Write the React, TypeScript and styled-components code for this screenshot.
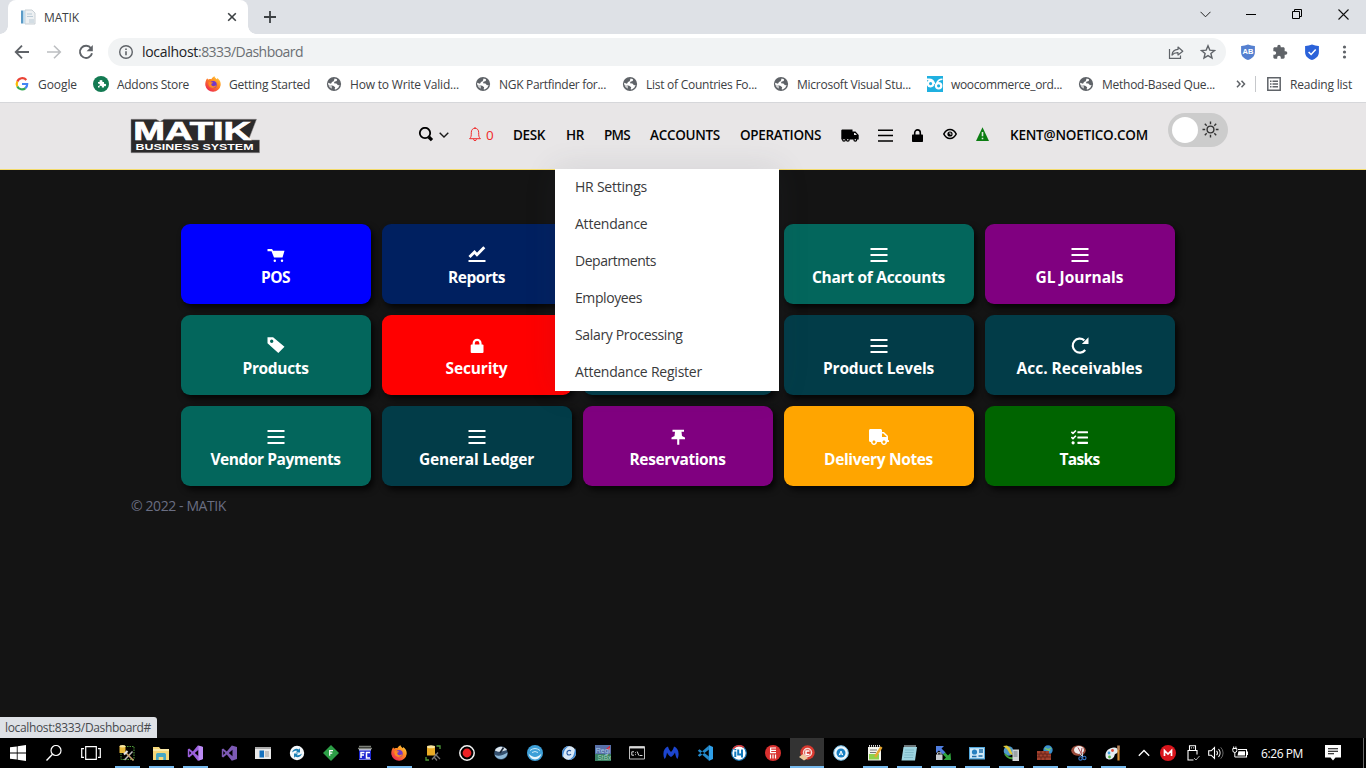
import React, { useLayoutEffect, useRef, useState } from 'react';
import styled, { createGlobalStyle, css } from 'styled-components';
import { FaTruck, FaTasks } from 'react-icons/fa';
import { MdExtension } from 'react-icons/md';

const GlobalStyle = createGlobalStyle`
  * { box-sizing: border-box; }
  html, body { margin: 0; padding: 0; overflow: hidden; }
  body { font-family: "Open Sans", "Noto Sans", sans-serif; }
  svg { display: block; flex: none; }
`;

/* ---------- text whose tracking adapts to a set width ---------- */

const FitSpan = styled.span<{ $w: number }>`
  display: block;
  flex: none;
  width: ${p => p.$w}px;
  white-space: nowrap;
`;

function Fit({ w, children }: { w: number; children: string }) {
  const ref = useRef<HTMLSpanElement>(null);
  const [spacing, setSpacing] = useState(0);
  useLayoutEffect(() => {
    if (!ref.current) return;
    const natural = ref.current.getBoundingClientRect().width;
    setSpacing((w - natural) / children.length);
  }, [w, children]);
  return (
    <FitSpan $w={w}>
      <span ref={ref} style={{ letterSpacing: spacing }}>{children}</span>
    </FitSpan>
  );
}

/* ---------- layout ---------- */

const Screen = styled.div`
  width: 1366px;
  height: 768px;
  display: flex;
  flex-direction: column;
  background: #141414;
`;

const TabStrip = styled.div`
  height: 34px;
  flex: none;
  display: flex;
  align-items: stretch;
  padding-left: 8px;
  background: #dee1e6;
  color: #3c4043;
`;

const Tab = styled.div`
  position: relative;
  width: 240px;
  display: flex;
  align-items: center;
  padding: 0 11px 0 12px;
  background: #fff;
  border-radius: 8px 8px 0 0;
  font-size: 12px;
  &::before, &::after {
    content: "";
    position: absolute;
    bottom: 0;
    width: 8px;
    height: 8px;
  }
  &::before { left: -8px; background: radial-gradient(circle at 0 0, transparent 7.5px, #fff 8px); }
  &::after { right: -8px; background: radial-gradient(circle at 100% 0, transparent 7.5px, #fff 8px); }
`;

const TabTitle = styled.div`
  margin-left: 8px;
  flex: 1;
`;

const NewTab = styled.div`
  display: flex;
  align-items: center;
  margin-left: 16px;
  flex: 1;
`;

const WindowButtons = styled.div`
  display: flex;
  padding-bottom: 6px;
`;

const WindowButton = styled.div`
  width: 46px;
  display: flex;
  align-items: center;
  justify-content: center;
`;

const Toolbar = styled.div`
  height: 36px;
  flex: none;
  display: flex;
  align-items: center;
  padding: 0 13px 0 14px;
  background: #fff;
`;

const NavButtons = styled.div`
  display: flex;
  gap: 16px;
  width: 94px;
`;

const Omnibox = styled.div`
  width: 1118px;
  height: 28px;
  display: flex;
  align-items: center;
  padding: 0 10px;
  border-radius: 14px;
  background: #f1f3f4;
  font-size: 14px;
  color: #6b6f73;
`;

const Url = styled.div`
  display: flex;
  flex: 1;
  margin: -1px 0 0 8px;
`;

const UrlHost = styled.div`
  color: #202124;
`;

const OmniActions = styled.div`
  display: flex;
  gap: 16px;
`;

const Extensions = styled.div`
  display: flex;
  align-items: center;
  gap: 16px;
  margin-left: 14px;
`;

const Bookmarks = styled.div`
  height: 33px;
  flex: none;
  display: flex;
  align-items: center;
  padding: 0 14px 4px;
  background: #fff;
  border-bottom: 1px solid #d6d7da;
  font-size: 12px;
  color: #3c4043;
`;

const BookmarkList = styled.div`
  display: flex;
  gap: 16px;
  width: 1222px;
`;

const Bookmark = styled.div`
  display: flex;
  align-items: center;
  gap: 8px;
`;

const ReadingList = styled.div`
  display: flex;
  align-items: center;
  gap: 9px;
  height: 16px;
  margin-left: 9px;
  padding-left: 11px;
  border-left: 1px solid #c6c8cb;
`;

const AppHeader = styled.header`
  height: 67px;
  flex: none;
  display: flex;
  padding-left: 130px;
  background: #e8e6e7;
  border-bottom: 1px solid #f3da6b;
`;

const LogoBox = styled.div`
  padding-top: 10px;
  width: 288px;
`;

const Menu = styled.nav`
  display: flex;
  align-items: center;
  height: 64px;
  color: #050505;
  font-size: 13.5px;
  font-weight: 600;
`;

const MenuItem = styled.div<{ $gap?: number }>`
  position: relative;
  display: flex;
  align-items: center;
  height: 100%;
  margin-right: ${p => p.$gap ?? 20}px;
`;

const BellItem = styled(MenuItem)`
  gap: 5px;
  color: #f02a2a;
  font-weight: 400;
`;

const Dropdown = styled.div`
  position: absolute;
  z-index: 5;
  left: -11px;
  top: 66px;
  width: 224px;
  background: #fff;
  box-shadow: 0 0 30px rgba(60, 66, 80, 0.12);
`;

const DropdownItem = styled.div`
  height: 37px;
  padding-left: 20px;
  font-size: 14px;
  font-weight: 400;
  line-height: 36px;
  color: #3a3a3c;
`;

const Toggle = styled.div`
  width: 60px;
  height: 34px;
  display: flex;
  align-items: center;
  justify-content: space-between;
  padding: 0 9px 0 4px;
  margin-bottom: 11px;
  border-radius: 17px;
  background: #ccc;
`;

const Knob = styled.div`
  width: 26px;
  height: 26px;
  border-radius: 50%;
  background: #fff;
`;

const Main = styled.main`
  flex: 1;
  display: flex;
  flex-direction: column;
  padding: 54px 0 0 131px;
`;

const CardGrid = styled.div`
  display: grid;
  grid-template-columns: repeat(5, 190px);
  gap: 11px;
  margin-left: 50px;
`;

const Card = styled.div<{ $bg: string }>`
  height: 80px;
  display: flex;
  flex-direction: column;
  align-items: center;
  padding: 22px 1px 0 0;
  border-radius: 9px;
  background: ${p => p.$bg};
  box-shadow: 3px 4px 6px rgba(0, 0, 0, 0.75);
  color: #fff;
`;

const CardIcon = styled.div`
  height: 18px;
  display: flex;
  align-items: center;
  justify-content: center;
`;

const CardLabel = styled.div`
  margin-top: 3px;
  font-size: 15.5px;
  font-weight: 700;
  line-height: 21px;
`;

const Copyright = styled.footer`
  margin-top: 10px;
  font-size: 14px;
  line-height: 20px;
  color: #6a6e82;
`;

const StatusBubble = styled.div`
  align-self: flex-start;
  width: 157px;
  height: 21px;
  padding-left: 5px;
  border-radius: 0 3px 0 0;
  background: #dee1e6;
  font-size: 12px;
  line-height: 21px;
  color: #46494d;
`;

const Taskbar = styled.div`
  height: 30px;
  flex: none;
  display: flex;
  background: #000;
  color: #fff;
`;

const TaskButton = styled.div<{ $w?: number; $open?: boolean; $active?: boolean }>`
  width: ${p => p.$w ?? 34}px;
  height: 30px;
  flex: none;
  display: flex;
  align-items: center;
  justify-content: center;
  ${p => p.$open && css`
    background: linear-gradient(#76b9ed, #76b9ed) center bottom / 25px 2px no-repeat;
  `}
  ${p => p.$active && css`
    background: linear-gradient(#76b9ed, #76b9ed) center bottom / 34px 2px no-repeat, #333;
  `}
`;

const Tray = styled.div`
  display: flex;
  align-items: center;
  flex: 1;
  margin-left: 2px;
`;

const Clock = styled.div`
  margin-left: 9px;
  font-size: 12px;
`;

const ShowDesktop = styled.div`
  width: 5px;
  height: 30px;
  margin-left: auto;
  border-left: 1px solid #6a6a6a;
`;

/* ---------- browser icons ---------- */

const PageIcon = () => (
  <svg width="16" height="16" viewBox="0 0 16 16">
    <path d="M5 1h7l3 3v11H5z" fill="#edf0f2" stroke="#c9d0d5" />
    <path d="M1 1.500h2.500v13H1z" fill="#5b9bc7" />
    <path d="M3.500 1.500H5v13H3.500z" fill="#c5dff0" />
    <path d="M7 5h5M7 7.500h6M9 11h5M9 13h5" stroke="#b9cad6" />
  </svg>
);

const Globe = () => (
  <svg width="16" height="16" viewBox="0 0 16 16">
    <circle cx="8" cy="8" r="7.1" fill="#5f6368" />
    <path d="M8.6 2.4 11 3.2 10.8 5 8.4 5.8 8 7.2 10.4 7.4 12 9.300 13.600 9 12.300 11.800 9.800 13.500 8.600 13.300 9.200 11.200 7.200 9.800 2.300 8.800 2.100 6.800 5 7.800 6 6 7.600 5.200z" fill="#fff" />
    <path d="M2.300 8.400 5.400 9.200 6 11 5.600 12.800A6 6 0 0 1 2.300 8.400z" fill="#fff" opacity=".7" />
  </svg>
);

const GoogleIcon = () => (
  <svg width="16" height="16" viewBox="0 0 16 16" fill="none" strokeWidth="2.2">
    <path d="M12.3 4A5.3 5.3 0 0 0 3.3 5.6" stroke="#ea4335" />
    <path d="M3.3 5.6a5.3 5.3 0 0 0 0 4.8" stroke="#fbbc05" />
    <path d="M3.3 10.4a5.3 5.3 0 0 0 8.2 1.7" stroke="#34a853" />
    <path d="M8 8h5.2a5.2 5.2 0 0 1-1.8 4.1" stroke="#4285f4" />
  </svg>
);

const AddonIcon = () => (
  <svg width="16" height="16" viewBox="0 0 16 16">
    <circle cx="8" cy="8" r="8" fill="#137a52" />
    <path d="M5 6h1.700a1.400 1.400 0 1 1 2.600 0H11v2a1.300 1.300 0 1 1 0 2v1.500H8.800a1.200 1.200 0 1 0-2.200 0H5V9.700a1.200 1.200 0 1 0 0-2z" fill="#fff" />
  </svg>
);

const Firefox = () => (
  <svg width="16" height="16" viewBox="0 0 16 16">
    <defs>
      <linearGradient id="fox" x1="1" y1="0" x2=".2" y2="1">
        <stop offset="0" stopColor="#ffe04b" />
        <stop offset=".45" stopColor="#ff8a1e" />
        <stop offset="1" stopColor="#ec2154" />
      </linearGradient>
    </defs>
    <path d="M2.2 2.2C2.5 3 3 3.4 3.6 3.6 4.5 3 5.5 3 6.4 3.2 7 1.8 8 .8 9.6.2c0 1.3 1.1 2 2.2 3 .4-.3.5-.7.5-1.1C14.7 3.9 16 6.2 15.7 9A7.8 7.8 0 0 1 .3 9.3C.1 6.5.8 4.2 2.2 2.2z" fill="url(#fox)" />
    <circle cx="8.2" cy="8.6" r="3.5" fill="#7138c9" />
    <path d="M3.5 6.2c1.4-.6 2.400 0 3.800 0 .8 0 .8.7-.6 1.400-.8.5-.5 2.500 1.600 2.700 1.400.1 2-.7 2.800-.7-.3 2-3.800 3.400-6.200 1.300-1.400-1.300-1.700-3-1.400-4.700z" fill="#ff8a20" />
  </svg>
);

const WooIcon = () => (
  <svg width="16" height="16" viewBox="0 0 16 16">
    <rect width="16" height="16" fill="#1fb0e0" />
    <g fill="none" stroke="#fff" strokeWidth="2.2">
      <circle cx="3.6" cy="7.6" r="2.700" />
      <circle cx="11.600" cy="9.800" r="2.700" />
      <path d="M0 3.400C4 2.600 6.500 4 7.500 8M15.500 3.200c-3.500 0-5 1.500-5.800 4.500" strokeWidth="1.600" />
    </g>
  </svg>
);

const StarIcon = () => (
  <svg width="16" height="16" viewBox="0 0 16 16" fill="none" stroke="#5f6368" strokeWidth="1.4">
    <path d="m8 1.800 1.800 4.300 4.700.4-3.600 3 1.100 4.600L8 11.600l-4 2.500 1.100-4.600-3.600-3 4.700-.4z" />
  </svg>
);

const ShareIcon = () => (
  <svg width="16" height="16" viewBox="0 0 16 16" fill="none" stroke="#5f6368" strokeWidth="1.2">
    <path d="M1.500 5v9.400h11V11.500" />
    <path d="M4 11c.3-3.500 2.400-5.400 6-5.600V3l4.800 4.200L10 11V8.700C7.500 8.600 5.500 9.300 4 11z" strokeLinejoin="round" />
  </svg>
);

const shieldShape = 'M8 .5Q11.500 2 14.900 1.900V8c0 4-2.600 6.500-6.900 8C3.700 14.500 1.100 12 1.100 8V1.900Q4.500 2 8 .5z';

const AbShield = () => (
  <svg width="16" height="16" viewBox="0 0 16 16">
    <path d={shieldShape} fill="#5580d0" />
    <text x="8" y="10.400" textAnchor="middle" fontSize="7.500" fontWeight="700" fontFamily="Liberation Sans, sans-serif" fill="#fff">AB</text>
  </svg>
);

const CheckShield = () => (
  <svg width="16" height="16" viewBox="0 0 16 16">
    <path d={shieldShape} fill="#2b62d9" />
    <path d="m4.600 8 2.500 2.500L11.700 5.500" fill="none" stroke="#fff" strokeWidth="1.500" />
  </svg>
);

/* ---------- app icons ---------- */

const Logo = () => (
  <svg width="130" height="41" viewBox="0 -5 130 41">
    <path d="M1 1.300H26L30 3.600 34 1.300H126.500L118.500 22H129.500V34.700H1z" fill="#2b2a2b" stroke="#8b898a" strokeWidth=".5" />
    <text x="3.200" y="22" textLength="118" lengthAdjust="spacingAndGlyphs" fontFamily="Liberation Sans, sans-serif" fontSize="25.500" fontWeight="700" fill="#fff" stroke="#fff" strokeWidth=".7">MATIK</text>
    <text x="5.500" y="32.300" textLength="118" lengthAdjust="spacingAndGlyphs" fontFamily="Liberation Sans, sans-serif" fontSize="9" fontWeight="700" fill="#fff">BUSINESS SYSTEM</text>
  </svg>
);

const SearchGlyph = () => (
  <svg width="16" height="16" viewBox="0 0 16 16" fill="none" stroke="#000">
    <circle cx="7" cy="6" r="5.200" strokeWidth="1.800" />
    <path d="m10.800 10 3.200 3.200" strokeWidth="3.200" />
  </svg>
);

const ChevronDown = () => (
  <svg width="10" height="6" viewBox="0 0 10 6" fill="none" stroke="#1a1a1a" strokeWidth="1.400">
    <path d="m.7.700 4.300 4.200L9.300.700" />
  </svg>
);

const Bell = () => (
  <svg width="12" height="16" viewBox="0 0 12 16" fill="none" stroke="#f02a2a" strokeWidth="1">
    <path d="M.6 11.700C2.300 10 2.300 9 2.300 5.500 2.300 3 3.700 1.300 6 1.300S9.700 3 9.700 5.500c0 3.500 0 4.500 1.700 6.200zM4.600 12.200a1.400 1.400 0 0 0 2.800 0M6 0v1.300" />
  </svg>
);

const NavTruck = () => (
  <svg width="18" height="13" viewBox="0 0 18 13">
    <path d="M1 .5h10.500v2H14.500L17.700 6v4.500H.3V1.200z" />
    <circle cx="3" cy="10.700" r="1.400" fill="#e8e6e7" stroke="#000" strokeWidth="1.200" />
    <circle cx="6.800" cy="10.700" r="1.400" fill="#e8e6e7" stroke="#000" strokeWidth="1.200" />
    <circle cx="14.300" cy="10.700" r="1.400" fill="#e8e6e7" stroke="#000" strokeWidth="1.200" />
    <path d="M13 4h1.200l1.700 2H13z" fill="#e8e6e7" />
  </svg>
);

const NavList = () => (
  <svg width="15" height="13" viewBox="0 0 15 13">
    <path d="M0 .500h15v1.500H0zM0 5.800h15v1.500H0zM0 11.200h15v1.500H0z" />
  </svg>
);

const NavLock = () => (
  <svg width="11" height="13" viewBox="0 0 11 13">
    <rect y="5.500" width="11" height="7.500" rx=".7" />
    <path d="M2.700 6V3.700a2.800 2.800 0 0 1 5.600 0V6" fill="none" stroke="#000" strokeWidth="1.600" />
  </svg>
);

const Eye = () => (
  <svg width="14" height="14" viewBox="0 0 14 14">
    <path d="M.8 6C2.300 3 4.400 1.500 7 1.500S11.700 3 13.200 6C11.700 9 9.600 10.500 7 10.500S2.300 9 .8 6z" fill="none" stroke="#000" strokeWidth="1.600" />
    <circle cx="7" cy="6" r="2.600" />
    <path d="M7 4.400v1.700h1.500" fill="none" stroke="#fff" strokeWidth=".9" />
  </svg>
);

const Warning = () => (
  <svg width="13" height="16" viewBox="0 0 13 16">
    <path d="M6.500.3 13 14H0z" fill="#0b7d12" />
    <path d="M6.500 5v4.300M6.500 10.700v1.600" stroke="#dfeadf" strokeWidth="1.600" />
  </svg>
);

const Sun = () => (
  <svg width="17" height="17" viewBox="0 0 17 17" fill="none" stroke="#333" strokeWidth="1.400">
    <circle cx="8.500" cy="8.500" r="3.400" />
    <path d="M8.500.5v2.700M8.500 13.800v2.700M.5 8.500h2.700M13.800 8.500h2.700M2.800 2.800l1.900 1.900M12.300 12.300l1.900 1.900M2.800 14.200l1.900-1.900M12.300 4.700l1.900-1.900" />
  </svg>
);

const CardSvg = ({ children }: { children: React.ReactNode }) => (
  <svg width="18" height="18" viewBox="-.5 0 18 18" fill="#fff">{children}</svg>
);

const Lines = () => (
  <CardSvg><path d="M0 2h17v2H0zM0 8h17v2H0zM0 14h17v2H0z" /></CardSvg>
);

const Cart = () => (
  <CardSvg>
    <path d="M0 3h4.500l1.200 1.800H17L15 11.500H6.500L4 5.200H0z" />
    <circle cx="7.300" cy="14.800" r="1.200" />
    <circle cx="14.500" cy="14.800" r="1.200" />
  </CardSvg>
);

const Trend = () => (
  <CardSvg>
    <path d="M0 14h17v2H0z" />
    <path d="M1 11 6 6l2.500 2.700L15.800 1.300" fill="none" stroke="#fff" strokeWidth="2.900" />
  </CardSvg>
);

const TagIcon = () => (
  <CardSvg>
    <path fillRule="evenodd" d="M0 .3h5.600L17 9.700 10.800 16 0 6.300zM4.200 2.500a1.700 1.700 0 1 0 0 3.400 1.700 1.700 0 0 0 0-3.400z" />
  </CardSvg>
);

const Padlock = () => (
  <CardSvg>
    <rect x="2.200" y="7.500" width="12.800" height="8.500" rx="1" />
    <path d="M5.200 9V6.300a3.400 3.400 0 0 1 6.800 0V9" fill="none" stroke="#fff" strokeWidth="2.200" />
  </CardSvg>
);

const Reload = () => (
  <CardSvg>
    <path d="M12.800 3.300A7 7 0 1 0 13.700 13" fill="none" stroke="#fff" strokeWidth="2.200" />
    <path d="M17 .3v6.700h-6.700z" />
  </CardSvg>
);

const Pin = () => (
  <CardSvg>
    <path d="M3 1.800h11.500v2H12l.5 4.200 3 1.600v1.700H9.800v5.400H7.700v-5.400H2V9.600L5 8l.5-4.200H3z" />
  </CardSvg>
);

/* ---------- taskbar icons ---------- */

const T = ({ children }: { children: React.ReactNode }) => (
  <svg width="16" height="16" viewBox="0 0 16 16" fill="none">{children}</svg>
);

const Windows = <T><path d="M0 2.300 6.800 1.400v6.200H0zM7.600 1.300 16 0v7.600H7.600zM0 8.400h6.800v6.200L0 13.700zM7.600 8.400H16V16l-8.400-1.300z" fill="#fff" /></T>;
const Search = <T><circle cx="10" cy="5.500" r="5" stroke="#fff" strokeWidth="1.200" /><path d="M6.500 9.200.5 15.500" stroke="#fff" strokeWidth="1.400" /></T>;
const TaskView = (
  <svg width="20" height="14" viewBox="0 0 20 14" fill="none" stroke="#fff" strokeWidth="1.200">
    <path d="M4.700.700h10.600v12.600H4.700zM3 2.600H.700v8.800H3M17 2.600h2.300v8.800H17" />
  </svg>
);
const DbTools = (
  <T>
    <path d="M5.500 1.500h9.500v13H2V8" stroke="#4f9a3a" strokeDasharray="1.500 1" />
    <path d="M.5 1h6v7h-6z" fill="#e8b93c" /><ellipse cx="3.500" cy="1.300" rx="3" ry="1.200" fill="#f8e6a0" />
    <path d="m5.500 15 8-8.500" stroke="#b5b5b5" strokeWidth="1.600" /><path d="m7 8 7.500 7.500" stroke="#c9a070" strokeWidth="1.600" /><path d="M5 9.500 8.500 6" stroke="#e2e2e2" strokeWidth="2.200" />
  </T>
);
const Folder = <T><path d="M0 2h6l1.500 2H16v11H0z" fill="#f5d778" /><path d="M0 4h16v2H0z" fill="#fbe9a8" /><path d="M3 15V9.500Q3 8 4.500 8h7Q13 8 13 9.500V15h-2.700v-3H5.700v3z" fill="#46a7c4" /></T>;
const VisualStudio = ({ dim }: { dim?: boolean }) => (
  <T>
    <path d="m.8 4.200 1.400-.7 3.600 3 5-6L16 2v12l-5.200 1.800-5-6.300-3.600 3-1.400-.7z" fill={dim ? '#7d5ab5' : '#9a5fdb'} />
    <path d="M2.300 6v4l2-2zM7.800 8l3.700 3.200V4.800z" fill="#000" />
    {!dim && <path d="M11.500.500 16 2v12l-4.500 1.800z" fill="#bd8cf5" />}
  </T>
);
const AppWindow = <T><path d="M0 2h16v12H0z" fill="#e9e9e9" /><path d="M0 2h16v2H0z" fill="#aaa" /><path d="M4.500 5.500H9v7H4.500z" fill="#1470bd" /><path d="M10 7h4M10 9h4M10 11h4" stroke="#999" /></T>;
const SyncBall = <T><circle cx="8" cy="8" r="7.200" fill="#f4f8fb" /><path d="M3 7.500C4 4 7.500 3 10 4.500L11 3v4.500H6.500L8.300 6C6.500 5.500 5 6 3 7.500zM13 8.500c-1 3.500-4.500 4.500-7 3L5 13V8.500h4.500L7.700 10c1.800.500 3.300 0 5.300-1.500z" fill="#1b7fb5" /></T>;
const GreenDiamond = <T><path d="m8 0 8 8-8 8-8-8z" fill="#2c9e46" /><path d="M6.700 10.800V5.700h3.300M6.700 8.200h2.600" stroke="#fff" strokeWidth="1.200" /></T>;
const FileCommander = <T><path d="M2 3h12v12H2z" fill="#ced2e8" /><path d="M2 1.500h12M1 3.500h14" stroke="#7c8078" strokeWidth="1.500" /><path d="M2 5.500h12v9H2z" fill="#1c25d0" /><path d="M4 13V7.500h3.500M4 10h3M13 7.500H9.500V13H13" stroke="#fff" strokeWidth="1.500" /></T>;
const DbConfig = <T><path d="M2 1.500h8v9H2z" fill="#e9ab25" /><ellipse cx="6" cy="1.700" rx="4" ry="1.500" fill="#fae6a0" /><path d="M11.500 1H15v3M1 12v3h3" stroke="#4f9a3a" strokeWidth="1.300" /><path d="m7 14.500 6-7M10 9l5 5M9 12l3 3.500" stroke="#777" strokeWidth="1.300" /></T>;
const Recorder = <T><circle cx="8" cy="8" r="7.200" stroke="#f3f3f3" strokeWidth="1.500" /><circle cx="8" cy="8" r="4.400" fill="#ed2024" /></T>;
const Sphere = <T><circle cx="8" cy="8" r="6.800" fill="#34506f" /><path d="M1.800 5.500C4.500 0 12 1 14 5c-4 1-7 3-12.200.500z" fill="#dfe8ef" /><path d="M1.500 9.500c4 2.500 9 .500 13-2 0 7-10 9.500-13 2z" fill="#8fb9d8" /><path d="M10.500 2.500 7 8" stroke="#182536" strokeWidth="1.600" /></T>;
const Wireless = <T><circle cx="8" cy="8" r="8" fill="#3d9fd8" /><path d="M1.500 8.500c4 4.500 9 4.500 13 0-.800 3-3 6-6.500 6s-5.700-3-6.500-6z" fill="#e8f5fc" /><path d="M3 5.500q5-4 10 0M5 7.500q3-2 6 0" stroke="#c8e8f8" strokeWidth="1" /></T>;
const Cyclone = <T><circle cx="8" cy="8" r="7" fill="#d9e9f8" /><path d="M2 13C-1 7 3 1 9 1c-4 1-6.500 4-7 12zM14 3c3 6-1 12-7 12 4-1 6.500-4 7-12z" fill="#3c86d2" /><path d="M10 6c-2-1.500-4.500 0-4 2.500.500 2 3 2 4 .500" stroke="#295ba4" strokeWidth="1.100" /></T>;
const RegiStar = (
  <T>
    <path d="M0 0h16v9H0z" fill="#5870a8" /><path d="M0 9h16v7H0z" fill="#3a8062" />
    <path d="m11 4 4-3.500V5z" fill="#d02c3c" />
    <text x=".7" y="8" fontSize="7" fontFamily="Liberation Sans, sans-serif" fill="#a9c8e4">Regi</text>
    <text x="2.500" y="14.700" fontSize="6.500" fontFamily="Liberation Sans, sans-serif" fill="#9fd2bc">StBx</text>
  </T>
);
const Terminal = <T><path d="M.5 1.500h15v12.500H.5z" fill="#000" stroke="#bfbfbf" /><path d="M.5 2.700h15" stroke="#d8d8d8" strokeWidth="1.500" /><path d="M5 6.800H2.800v3.400H5M6.500 7.300v.8M6.500 9.300v.8M8.200 6.500l1.600 4M10.500 10.500h3" stroke="#f0f0f0" strokeWidth=".9" /></T>;
const Malware = <T><path d="M1.500 14C-1 8 1 3 5 1.500c.500 2 1.500 4 3 5.500 1.500-1.500 2.500-3.500 3-5.500 4 1.500 6 6.500 3.500 12.500-1.500-1-2-4-2.500-6.500C11 10 9.500 11 8 12 6.500 11 5 10 4 7.500 3.500 10 3 13 1.500 14z" fill="#1c45cf" /></T>;
const Code = <T><path d="M11.800 0 16 2v12l-4.200 2z" fill="#2f9fe8" /><path d="m11.800.500-11 9.700 1.700 1.500L12 4.500zM11.800 15.500.8 5.800l1.700-1.500L12 11.500z" fill="#2489ca" /></T>;
const RoundIu = <T><circle cx="8" cy="8" r="7.300" fill="#fff" stroke="#1675b5" strokeWidth="1.200" /><path d="M2 4A7.300 7.300 0 0 1 13 2.500" stroke="#dd3b3b" strokeWidth="1.500" /><path d="M4.300 6.500V12M4.300 4v1.300M7.200 4.500V9.500h4.600M11 4.500v8" stroke="#0f78bc" strokeWidth="2" /></T>;
const RoundFi = <T><circle cx="8" cy="8" r="8" fill="#d9302f" /><path d="M5 3h6M5 5.300h6M5 7.600h6M5.600 3v4.600M5.500 9.500v4M8 9.500v4M10.500 9.500v4" stroke="#fff" strokeWidth="1.200" /></T>;
const RedBall = <T><circle cx="8.500" cy="7.500" r="7.200" fill="#d8392f" /><circle cx="8.500" cy="7.500" r="4" stroke="#f6d8d4" strokeWidth="1.500" /><path d="M10.500 6H7v3.500h3.500" stroke="#fff" strokeWidth="1.500" /><path d="m0 12 4-3 5 4-4 2.500z" fill="#efc79b" /></T>;
const BlueA = <T><circle cx="8" cy="8" r="7.300" fill="#eef8fd" stroke="#77bce3" /><circle cx="8" cy="8" r="4.500" fill="#1780c4" /><path d="M6.200 10.200 8 6l1.800 4.200M7 9h2" stroke="#fff" strokeWidth="1" /></T>;
const NotepadPlus = <T><path d="M1 2h13v13.500H1z" fill="#f5f5ee" /><path d="M2 9h10v5.500H2z" fill="#8ed14c" /><path d="M2 .8h11" stroke="#ddd" strokeWidth="2" strokeDasharray="1 1" /><path d="M3 5h7M3 7.500h6" stroke="#777" /><path d="m8 12 6.500-10" stroke="#e6a732" strokeWidth="2.400" /></T>;
const Notepad = <T><path d="M2.500 2H16l-2 13.500H.5z" fill="#9dd4e0" /><path d="M3.500 1h11.500" stroke="#d9edf2" strokeWidth="2" strokeDasharray="1 1" /><path d="M4 5h9M3.700 7.500h9M3.400 10h9M3 12.500h9" stroke="#74afbd" strokeWidth=".7" /></T>;
const Transfer = <T><path d="M1 1h8L6.500 3.500l4 4-2.500 2-4-4L1 8z" fill="#4f7ee0" /><path d="M16 15H8.500L11 12.500 8 9.500l2-2 3 3L15.500 8z" fill="#2fa83d" /><path d="M1 9.500h6.500V15H1z" fill="#c8ccd0" /><path d="M2.500 9.500V7.800h3.500v1.700" stroke="#c8ccd0" /></T>;
const Panel = <T><path d="M0 2h16v12.500H0z" fill="#53a8dd" /><path d="M1 3.200h14v10H1z" fill="#cfe9f8" /><circle cx="5.500" cy="7" r="2.600" fill="#2680c0" /><path d="M10 5h4M10 7h4M3 11.500h4.500M9.500 11h4" stroke="#1d6da9" strokeWidth="1.500" /></T>;
const Server = <T><circle cx="5.500" cy="6" r="4.800" fill="#4f9acb" /><path d="m0 1 4-.500 3 2.500 3 7-3-1-3-5z" fill="#ddc83a" /><path d="M2 9c3 4 5 5 8 4" stroke="#43a03a" strokeWidth="2" /><path d="M9.500 4.500H16V16H9.500z" fill="#cfd3d6" /><path d="M10.500 7h4M10.500 9h4M10.500 11h4" stroke="#6a7278" /></T>;
const Firewall = <T><circle cx="11" cy="5" r="4.700" fill="#3a90cf" /><path d="M8 3q3 3 6 0M9 8l4-3" stroke="#7ac66b" strokeWidth="1.500" /><path d="M0 6h12v3h2v6H0z" fill="#a3412d" /><path d="M0 9h14M0 12h14M4 6v3M8 6v3M2 9v3M6 9v3M10 9v3M4 12v3M8 12v3" stroke="#5e2016" strokeWidth=".8" /></T>;
const Snip = <T><ellipse cx="7.500" cy="5.500" rx="7.300" ry="5.200" fill="#9a4a3a" /><ellipse cx="8" cy="5" rx="5" ry="3.900" fill="#f2eeee" /><path d="M7 2.500 10 8 11 3" stroke="#a5505a" /><path d="m8 8 4 4M11.500 8v4" stroke="#b8c9db" /><circle cx="9.500" cy="13.500" r="1.700" stroke="#3978c8" strokeWidth="1.100" /><circle cx="13.300" cy="13" r="1.700" stroke="#3978c8" strokeWidth="1.100" /></T>;
const Paint = <T><path d="M1 13C-1 8 3 2.500 9 2.500c4 0 5 3 3.500 5-.800 1.500-3 1-3 3C9 14 4 16 1 13z" fill="#e5ecf1" /><circle cx="4" cy="8" r="1.400" fill="#3a9de0" /><circle cx="7.500" cy="5.500" r="1.400" fill="#e04c3a" /><circle cx="4.500" cy="12" r="1.400" fill="#53b949" /><path d="M13.500 5v10.500" stroke="#d68a2f" strokeWidth="2.200" /><path d="M13.500.500V5" stroke="#b9855a" strokeWidth="2.600" /></T>;

type Task = { icon: React.ReactNode; open?: boolean; active?: boolean };

const tasks: Task[] = [
  { icon: DbTools, open: true },
  { icon: Folder, open: true },
  { icon: <VisualStudio />, open: true },
  { icon: <VisualStudio dim /> },
  { icon: AppWindow },
  { icon: SyncBall },
  { icon: GreenDiamond },
  { icon: FileCommander },
  { icon: <Firefox />, open: true },
  { icon: DbConfig },
  { icon: Recorder },
  { icon: Sphere },
  { icon: Wireless },
  { icon: Cyclone },
  { icon: RegiStar },
  { icon: Terminal },
  { icon: Malware },
  { icon: Code },
  { icon: RoundIu },
  { icon: RoundFi },
  { icon: RedBall, active: true },
  { icon: BlueA },
  { icon: NotepadPlus, open: true },
  { icon: Notepad, open: true },
  { icon: Transfer, open: true },
  { icon: Panel, open: true },
  { icon: Server, open: true },
  { icon: Firewall, open: true },
  { icon: Snip, open: true },
  { icon: Paint, open: true },
];

/* ---------- data ---------- */

const bookmarks: { label: string; w: number; icon?: React.ReactNode }[] = [
  { label: 'Google', w: 39, icon: <GoogleIcon /> },
  { label: 'Addons Store', w: 72, icon: <AddonIcon /> },
  { label: 'Getting Started', w: 81, icon: <Firefox /> },
  { label: 'How to Write Valid...', w: 109 },
  { label: 'NGK Partfinder for...', w: 107 },
  { label: 'List of Countries Fo...', w: 111 },
  { label: 'Microsoft Visual Stu...', w: 114 },
  { label: 'woocommerce_ord...', w: 111, icon: <WooIcon /> },
  { label: 'Method-Based Que...', w: 113 },
];

const hrMenu = [
  { label: 'HR Settings', w: 72 },
  { label: 'Attendance', w: 72.5 },
  { label: 'Departments', w: 81 },
  { label: 'Employees', w: 67 },
  { label: 'Salary Processing', w: 107.5 },
  { label: 'Attendance Register', w: 127 },
];

const teal = '#03665c';
const petrol = '#023c48';

const cards: { label?: string; w?: number; bg: string; icon?: React.ReactNode }[] = [
  { label: 'POS', w: 29, bg: '#0000ff', icon: <Cart /> },
  { label: 'Reports', w: 57, bg: '#002060', icon: <Trend /> },
  { bg: teal },
  { label: 'Chart of Accounts', w: 133, bg: teal, icon: <Lines /> },
  { label: 'GL Journals', w: 88, bg: '#800080', icon: <Lines /> },
  { label: 'Products', w: 66, bg: teal, icon: <TagIcon /> },
  { label: 'Security', w: 62, bg: '#ff0000', icon: <Padlock /> },
  { bg: petrol },
  { label: 'Product Levels', w: 111, bg: petrol, icon: <Lines /> },
  { label: 'Acc. Receivables', w: 126, bg: petrol, icon: <Reload /> },
  { label: 'Vendor Payments', w: 130, bg: teal, icon: <Lines /> },
  { label: 'General Ledger', w: 115, bg: petrol, icon: <Lines /> },
  { label: 'Reservations', w: 96, bg: '#800080', icon: <Pin /> },
  { label: 'Delivery Notes', w: 109, bg: '#ffa500', icon: <FaTruck size={20} /> },
  { label: 'Tasks', w: 40, bg: '#006400', icon: <FaTasks size={17} /> },
];

export default function App() {
  return (
    <Screen>
      <GlobalStyle />
      <TabStrip>
        <Tab>
          <PageIcon />
          <TabTitle><Fit w={35}>MATIK</Fit></TabTitle>
          <svg width="10" height="10" viewBox="0 0 10 10" stroke="#3c4043" strokeWidth="1.600"><path d="m1.200 1.200 7.600 7.600M8.800 1.200 1.200 8.800" /></svg>
        </Tab>
        <NewTab>
          <svg width="12" height="12" viewBox="0 0 12 12" stroke="#3c4043" strokeWidth="1.800"><path d="M6 0v12M0 6h12" /></svg>
        </NewTab>
        <WindowButtons>
          <WindowButton><svg width="11" height="7" viewBox="0 0 11 7" fill="none" stroke="#222"><path d="m.5.800 5 5 5-5" /></svg></WindowButton>
          <WindowButton><svg width="10" height="2" viewBox="0 0 10 2"><path d="M0 1h10v1H0z" /></svg></WindowButton>
          <WindowButton><svg width="10" height="10" viewBox="0 0 10 10" fill="none" stroke="#000"><path d="M.5 2.500h7v7h-7zM2.500 2.500v-2h7v7h-2" /></svg></WindowButton>
          <WindowButton><svg width="11" height="11" viewBox="0 0 11 11" stroke="#111" strokeWidth="1.100"><path d="m.5.500 10 10M10.500.500l-10 10" /></svg></WindowButton>
        </WindowButtons>
      </TabStrip>

      <Toolbar>
        <NavButtons>
          <svg width="16" height="16" viewBox="0 0 16 16" fill="none" stroke="#5f6368" strokeWidth="1.800"><path d="M15 8H2M8 1.700 1.700 8 8 14.300" /></svg>
          <svg width="16" height="16" viewBox="0 0 16 16" fill="none" stroke="#bcbec1" strokeWidth="1.600"><path d="M1 8h13M8 1.700 14.300 8 8 14.300" /></svg>
          <svg width="16" height="16" viewBox="0 0 16 16" fill="none" stroke="#5f6368" strokeWidth="1.900"><path d="M13 4.200A6.100 6.100 0 1 0 14 9.200" /><path d="M14.800 1v6.200H8.600z" fill="#5f6368" stroke="none" /></svg>
        </NavButtons>
        <Omnibox>
          <svg width="16" height="16" viewBox="0 0 16 16" fill="none" stroke="#5f6368" strokeWidth="1.400"><circle cx="8" cy="8" r="6.300" /><path d="M8 7.200v4M8 4.500v1.500" strokeWidth="1.600" /></svg>
          <Url>
            <UrlHost><Fit w={56}>localhost</Fit></UrlHost>
            <Fit w={105}>:8333/Dashboard</Fit>
          </Url>
          <OmniActions><ShareIcon /><StarIcon /></OmniActions>
        </Omnibox>
        <Extensions>
          <AbShield />
          <MdExtension size={16} color="#5f6368" />
          <CheckShield />
          <svg width="16" height="16" viewBox="0 0 16 16" fill="#5f6368"><circle cx="8.500" cy="3" r="1.600" /><circle cx="8.500" cy="8" r="1.600" /><circle cx="8.500" cy="13" r="1.600" /></svg>
        </Extensions>
      </Toolbar>

      <Bookmarks>
        <BookmarkList>
          {bookmarks.map(b => (
            <Bookmark key={b.label}>
              {b.icon ?? <Globe />}
              <Fit w={b.w}>{b.label}</Fit>
            </Bookmark>
          ))}
        </BookmarkList>
        <svg width="10" height="8" viewBox="0 0 10 8" fill="none" stroke="#5f6368" strokeWidth="1.500"><path d="m1 .800 3 3.200-3 3.200M5.500.800l3 3.200-3 3.200" /></svg>
        <ReadingList>
          <svg width="14" height="14" viewBox="0 0 14 14" fill="none" stroke="#5f6368" strokeWidth="1.500"><path d="M.800.800h12.400v12.400H.800zM5.500 4.200h5.500M5.500 7h5.500M5.500 9.800h5.500M3 4.200h1.500M3 7h1.500M3 9.800h1.500" /></svg>
          <Fit w={62}>Reading list</Fit>
        </ReadingList>
      </Bookmarks>

      <AppHeader>
        <LogoBox><Logo /></LogoBox>
        <Menu>
          <MenuItem $gap={5}><SearchGlyph /></MenuItem>
          <MenuItem><ChevronDown /></MenuItem>
          <BellItem><Bell /><Fit w={7}>0</Fit></BellItem>
          <MenuItem $gap={21}><Fit w={32}>DESK</Fit></MenuItem>
          <MenuItem $gap={20}>
            <Fit w={18}>HR</Fit>
            <Dropdown>
              {hrMenu.map(m => (
                <DropdownItem key={m.label}><Fit w={m.w}>{m.label}</Fit></DropdownItem>
              ))}
            </Dropdown>
          </MenuItem>
          <MenuItem><Fit w={26}>PMS</Fit></MenuItem>
          <MenuItem><Fit w={70}>ACCOUNTS</Fit></MenuItem>
          <MenuItem><Fit w={81}>OPERATIONS</Fit></MenuItem>
          <MenuItem $gap={19}><NavTruck /></MenuItem>
          <MenuItem $gap={19}><NavList /></MenuItem>
          <MenuItem><NavLock /></MenuItem>
          <MenuItem $gap={19}><Eye /></MenuItem>
          <MenuItem $gap={21}><Warning /></MenuItem>
          <MenuItem><Fit w={138}>KENT@NOETICO.COM</Fit></MenuItem>
          <Toggle><Knob /><Sun /></Toggle>
        </Menu>
      </AppHeader>

      <Main>
        <CardGrid>
          {cards.map((c, i) => (
            <Card key={i} $bg={c.bg}>
              {c.icon && <CardIcon>{c.icon}</CardIcon>}
              {c.label && <CardLabel><Fit w={c.w ?? 0}>{c.label}</Fit></CardLabel>}
            </Card>
          ))}
        </CardGrid>
        <Copyright><Fit w={95}>© 2022 - MATIK</Fit></Copyright>
      </Main>

      <StatusBubble><Fit w={146}>localhost:8333/Dashboard#</Fit></StatusBubble>

      <Taskbar>
        <TaskButton $w={36}>{Windows}</TaskButton>
        <TaskButton $w={36}>{Search}</TaskButton>
        <TaskButton $w={38}>{TaskView}</TaskButton>
        {tasks.map((t, i) => (
          <TaskButton key={i} $open={t.open} $active={t.active}>{t.icon}</TaskButton>
        ))}
        <Tray>
          <TaskButton $w={24}><svg width="12" height="8" viewBox="0 0 12 8" fill="none" stroke="#fff" strokeWidth="1.300"><path d="m.8 6.800 5.200-5.300 5.200 5.300" /></svg></TaskButton>
          <TaskButton $w={24}><T><circle cx="8" cy="8" r="8" fill="#d9151c" /><path d="M4.500 11V5.500L8 9l3.500-3.500V11" stroke="#fff" strokeWidth="1.700" /></T></TaskButton>
          <TaskButton $w={24}><T><path d="M5.500 5V.8h6V5M4 5.500h9v4M4 5v10h5.500M7 2.900h.8M9.300 2.900h.8" stroke="#fff" strokeWidth="1.100" /><path d="m10 13 2 2 3.500-4" stroke="#aaa" /></T></TaskButton>
          <TaskButton $w={24}><T><path d="M.7 5.800h2.500L6.500 2.500v11L3.200 10.200H.700z" stroke="#fff" strokeWidth="1.100" /><path d="M8.500 5.800a3 3 0 0 1 0 4.400M10.500 4a6 6 0 0 1 0 8" stroke="#fff" strokeWidth="1.100" /><path d="M12.700 2.300a8 8 0 0 1 0 11.400" stroke="#666" /></T></TaskButton>
          <TaskButton $w={24}><T><path d="M6 4.500h8.500v7.500H4M15.500 6.500v3.500" stroke="#fff" strokeWidth="1.100" /><path d="M6.500 6.200h6.500v4.200H5.500z" fill="#fff" /><path d="M.8 3.500h4v2a2 2 0 0 1-4 0zM1.700 1.500v2M3.900 1.500v2M2.800 7.500v4.500H4" stroke="#fff" /></T></TaskButton>
          <Clock><Fit w={42}>6:26 PM</Fit></Clock>
          <TaskButton $w={60}><T><path d="M0 0h16v12.500h-5.500L8 15.500l-2.500-3H0z" fill="#fff" /><path d="M3 3.700h10M3 6.200h10M3 8.800h6" stroke="#000" strokeWidth="1.100" /></T></TaskButton>
          <ShowDesktop />
        </Tray>
      </Taskbar>
    </Screen>
  );
}
